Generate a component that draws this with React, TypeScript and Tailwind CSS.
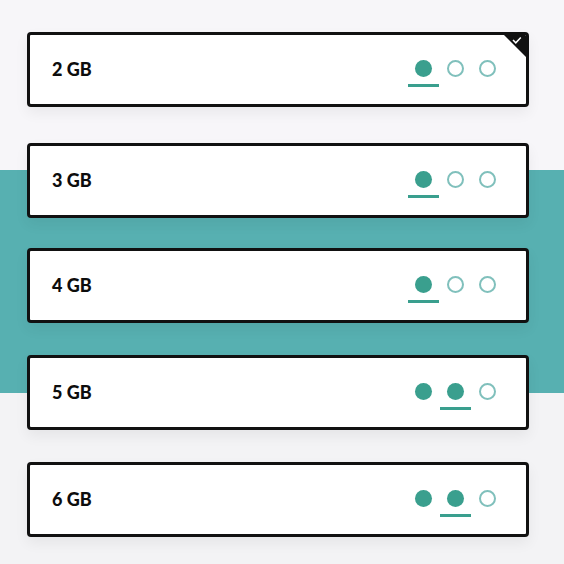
import React from "react";

const cards = [
  { label: "2 GB", filled: 1, sel: 0, mt: "mt-[32px]", badge: true },
  { label: "3 GB", filled: 1, sel: 0, mt: "mt-[36px]", badge: false },
  { label: "4 GB", filled: 1, sel: 0, mt: "mt-[30px]", badge: false },
  { label: "5 GB", filled: 2, sel: 1, mt: "mt-[32px]", badge: false },
  { label: "6 GB", filled: 2, sel: 1, mt: "mt-[32px]", badge: false },
];

function Dot({ filled, selected }: { filled: boolean; selected: boolean }) {
  return (
    <div className="flex w-[32px] flex-col items-center gap-[7px]">
      <div
        className={
          filled
            ? "h-[17px] w-[17px] rounded-full bg-[#3a9f8e]"
            : "h-[17px] w-[17px] rounded-full border-[2px] border-[#80c0bc] bg-white"
        }
      />
      <div className={selected ? "h-[3px] w-[31px] bg-[#3a9f8e]" : "h-[3px] w-[31px]"} />
    </div>
  );
}

export default function App() {
  return (
    <div
      className="h-[564px] w-[564px] overflow-hidden bg-[linear-gradient(to_bottom,#f7f6f9_0px,#f7f6f9_170px,#57b0b1_170px,#57b0b1_393px,#f3f3f5_393px,#f3f3f5_564px)]"
      style={{ fontFamily: "Lato, 'Noto Sans', sans-serif" }}
    >
      <div className="flex flex-col px-[27px]">
        {cards.map((c) => (
          <div
            key={c.label}
            className={`relative ${c.mt} flex h-[75px] w-[502px] shrink-0 items-start overflow-hidden rounded-[4px] border-[3px] border-[#111] bg-white shadow-[0_6px_14px_rgba(0,0,0,0.06)]`}
          >
            <div className="flex h-full items-center pl-[22px] text-[18px] font-black text-[#0d0d0d]">
              {c.label}
            </div>
            <div className="ml-auto flex pr-[23px] pt-[25px]">
              {[0, 1, 2].map((i) => (
                <Dot key={i} filled={i < c.filled} selected={i === c.sel} />
              ))}
            </div>
            {c.badge && (
              <div className="absolute right-0 top-0 h-[22px] w-[22px]">
                <svg width="22" height="22" viewBox="0 0 22 22">
                  <polygon points="0,0 22,0 22,22" fill="#111" />
                  <path d="M9 5 L11.8 7.8 L16.8 2.5" stroke="#fff" strokeWidth="1.5" fill="none" />
                </svg>
              </div>
            )}
          </div>
        ))}
      </div>
    </div>
  );
}
